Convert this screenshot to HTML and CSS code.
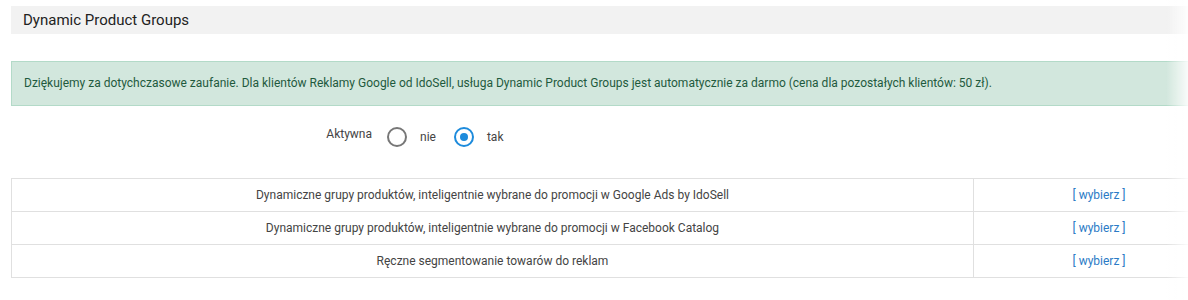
FILE: index.html
```html
<!DOCTYPE html>
<html lang="pl">
<head>
  <meta charset="UTF-8">
  <title>Dynamic Product Groups</title>
  <link rel="stylesheet" href="styles.css">
</head>
<body>
  <div class="page">
    <div class="title-bar">Dynamic Product Groups</div>

    <div class="notice">
      Dziękujemy za dotychczasowe zaufanie. Dla klientów Reklamy Google od IdoSell, usługa Dynamic Product Groups jest automatycznie za darmo (cena dla pozostałych klientów: 50 zł).
    </div>

    <div class="form-row">
      <div class="form-label">Aktywna</div>
      <div class="radio-group">
        <label class="radio"><span class="radio-dot"></span>nie</label>
        <label class="radio checked"><span class="radio-dot"></span>tak</label>
      </div>
    </div>

    <table class="options">
      <tr>
        <td class="name">Dynamiczne grupy produktów, inteligentnie wybrane do promocji w Google Ads by IdoSell</td>
        <td class="action"><a href="#">[ wybierz ]</a></td>
      </tr>
      <tr>
        <td class="name">Dynamiczne grupy produktów, inteligentnie wybrane do promocji w Facebook Catalog</td>
        <td class="action"><a href="#">[ wybierz ]</a></td>
      </tr>
      <tr>
        <td class="name">Ręczne segmentowanie towarów do reklam</td>
        <td class="action"><a href="#">[ wybierz ]</a></td>
      </tr>
    </table>
  </div>
  <div class="edge-fade"></div>
</body>
</html>
```

FILE: styles.css
```css
:root {
  --text: #444;
  --border: #e0e0e0;
  --link: #2b7bc6;
  --blue: #1d8bdc;
}

body {
  margin: 0;
  font-family: Roboto, "Liberation Sans", sans-serif;
  color: var(--text);
  background: #fff;
  overflow: hidden;
}

.page {
  width: 1214px;
  padding: 6px 0 0 11px;
}

.title-bar {
  background: #f2f2f2;
  height: 28px;
  line-height: 28px;
  padding-left: 12px;
  font-size: 15px;
  color: #222;
}

.notice {
  margin-top: 27px;
  background: #d2e7dd;
  border: 1px solid #b3dac8;
  color: #1f5a3d;
  font-size: 12px;
  line-height: 43px;
  padding: 0 12px;
  white-space: nowrap;
}

.form-row {
  display: grid;
  grid-template-columns: 361px 1fr;
  align-items: center;
  margin-top: 16px;
  height: 28px;
  font-size: 12px;
}

.form-label {
  text-align: right;
  margin-top: -4px;
}

.radio-group {
  display: flex;
  align-items: center;
  padding-left: 15px;
  gap: 18px;
}

.radio {
  display: flex;
  align-items: center;
  gap: 13px;
  padding-top: 2px;
}

.radio-dot {
  width: 16px;
  height: 16px;
  border: 2px solid #777;
  border-radius: 50%;
  box-sizing: content-box;
  position: relative;
}

.radio.checked .radio-dot {
  border-color: var(--blue);
}

.radio.checked .radio-dot::after {
  content: "";
  position: absolute;
  left: 4px;
  top: 4px;
  width: 8px;
  height: 8px;
  border-radius: 50%;
  background: var(--blue);
}

.options {
  margin-top: 28px;
  width: 100%;
  border-collapse: collapse;
  font-size: 12px;
}

.options td {
  border: 1px solid var(--border);
  height: 32px;
  padding: 0;
  text-align: center;
  vertical-align: middle;
}

.options td.name {
  width: 961px;
}

.options a {
  color: var(--link);
  text-decoration: none;
}

.edge-fade {
  position: fixed;
  top: 0;
  right: 0;
  width: 22px;
  height: 100%;
  background: linear-gradient(to right, rgba(255,255,255,0), rgba(255,255,255,0.85));
}
```
